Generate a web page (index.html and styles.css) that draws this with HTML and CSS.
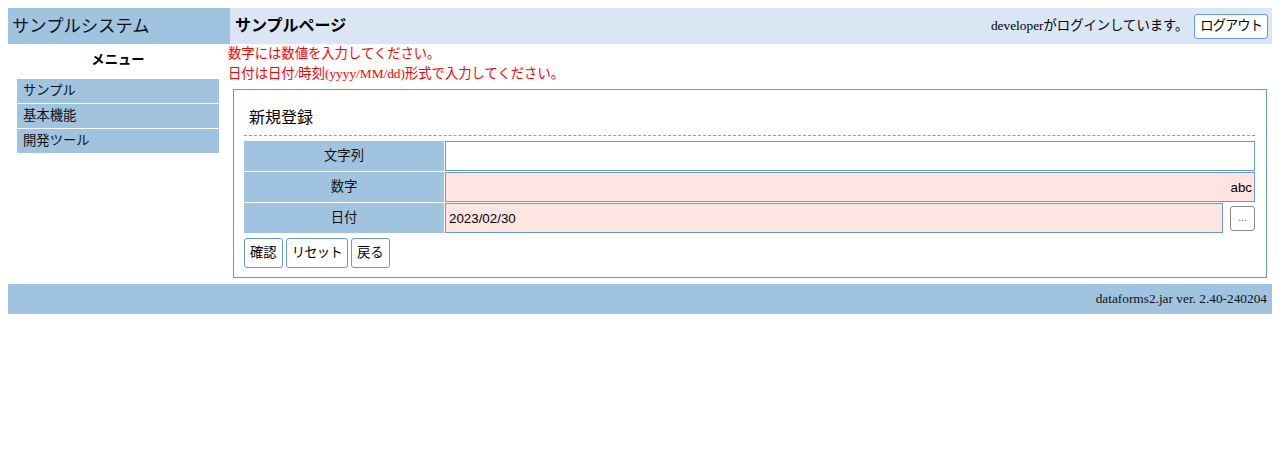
FILE: index.html
```html
<!DOCTYPE html>
<html lang="ja">
<head>
<meta charset="utf-8">
<title>サンプルページ</title>
<link rel="stylesheet" href="styles.css">
</head>
<body>
<div class="page">
  <header class="top">
    <div class="sys">サンプルシステム</div>
    <div class="bar">
      <h1 class="page-title">サンプルページ</h1>
      <div class="user">
        <span class="user-text">developerがログインしています。</span>
        <button class="btn logout" type="button">ログアウト</button>
      </div>
    </div>
  </header>
  <div class="main">
    <nav class="side">
      <div class="menu-title">メニュー</div>
      <ul class="menu">
        <li class="menu-item">サンプル</li>
        <li class="menu-item">基本機能</li>
        <li class="menu-item">開発ツール</li>
      </ul>
    </nav>
    <section class="content">
      <div class="errors">
        <div class="error">数字には数値を入力してください。</div>
        <div class="error">日付は日付/時刻(yyyy/MM/dd)形式で入力してください。</div>
      </div>
      <div class="form-box">
        <div class="form-title">新規登録</div>
        <div class="form-grid">
          <div class="label">文字列</div>
          <div class="field"><input class="text-input" type="text" value=""></div>
          <div class="label">数字</div>
          <div class="field"><input class="text-input error-input num" type="text" value="abc"></div>
          <div class="label">日付</div>
          <div class="field date-field">
            <input class="text-input error-input" type="text" value="2023/02/30">
            <button class="pick" type="button">...</button>
          </div>
        </div>
        <div class="actions">
          <button class="btn action" type="button">確認</button>
          <button class="btn action kana" type="button">リセット</button>
          <button class="btn action" type="button">戻る</button>
        </div>
      </div>
    </section>
  </div>
  <footer class="foot">dataforms2.jar ver. 2.40-240204</footer>
</div>
</body>
</html>
```

FILE: styles.css
```css
html, body {
  margin: 0;
  padding: 0;
  background: #ffffff;
}
body {
  margin: 8px;
  font-family: "Liberation Serif", "Noto Sans CJK JP", serif;
  font-size: 13.33px;
  color: #000;
}
.top {
  display: flex;
  height: 36px;
}
.sys {
  width: 218px;
  padding-left: 4px;
  background: #a0c3e0;
  font-family: "Liberation Sans", "Noto Sans CJK JP", sans-serif;
  font-size: 17.33px;
  line-height: 36px;
  color: #111;
}
.bar {
  flex: 1;
  display: flex;
  align-items: center;
  justify-content: space-between;
  padding: 0 4px 0 5px;
  background: #dae6f3;
}
.page-title {
  margin: 0;
  font-family: "Liberation Sans", "Noto Sans CJK JP", sans-serif;
  font-size: 16px;
  font-weight: bold;
  line-height: 36px;
}
.user {
  display: flex;
  align-items: center;
  gap: 6px;
}
.user-text {
  font-size: 13.33px;
  line-height: 20px;
}
.btn {
  font-family: "Liberation Sans", "Noto Sans CJK JP", sans-serif;
  font-size: 13.33px;
  color: #000;
  background: #fff;
  border: 1px solid #6699cc;
  border-radius: 3px;
  padding: 0 5px;
  margin: 0;
}
.logout {
  height: 25px;
  line-height: 22px;
  letter-spacing: -1px;
}
.main {
  display: flex;
}
.side {
  width: 220px;
  padding-top: 6px;
  font-family: "Liberation Sans", "Noto Sans CJK JP", sans-serif;
}
.menu-title {
  text-align: center;
  font-weight: bold;
  line-height: 20px;
  margin-bottom: 9px;
}
.menu {
  list-style: none;
  margin: 0 9px;
  padding: 0;
  display: flex;
  flex-direction: column;
  gap: 1px;
}
.menu-item {
  height: 24px;
  line-height: 24px;
  padding-left: 6px;
  background: #a0c3e0;
  color: #111;
}
.content {
  flex: 1;
  padding-bottom: 6px;
}
.errors {
  color: #ff0000;
  line-height: 20px;
}
.form-box {
  margin: 5px 5px 0;
  border: 1px solid #6699cc;
  padding: 10px 11px 9px 10px;
}
.form-title {
  font-family: "Liberation Sans", "Noto Sans CJK JP", sans-serif;
  font-size: 16px;
  line-height: 24px;
  padding: 6px 5px 5px;
  border-bottom: 1px dashed #7f9fbf;
}
.form-grid {
  margin-top: 5px;
  display: grid;
  grid-template-columns: 200px 1fr;
  grid-auto-rows: 30px;
  gap: 1px;
  font-family: "Liberation Sans", "Noto Sans CJK JP", sans-serif;
}
.label {
  background: #a0c3e0;
  text-align: center;
  line-height: 30px;
  color: #111;
}
.field {
  display: flex;
  align-items: stretch;
}
.date-field {
  align-items: center;
}
.text-input {
  flex: 1;
  min-width: 0;
  height: 30px;
  box-sizing: border-box;
  margin: 0;
  border: 1px solid #6699cc;
  padding: 0 3px;
  font-family: "Liberation Sans", "Noto Sans CJK JP", sans-serif;
  font-size: 13.33px;
  color: #000;
  background: #fff;
  outline: none;
}
.error-input {
  background: #ffe4e1;
}
.num {
  text-align: right;
  padding-right: 2px;
}
.pick {
  width: 25px;
  height: 25px;
  margin: 0 0 0 7px;
  padding: 0;
  border: 1px solid #888;
  border-radius: 3px;
  background: #fff;
  color: #555;
  font-family: "Liberation Sans", sans-serif;
  font-size: 10px;
  line-height: 20px;
}
.actions {
  display: flex;
  gap: 3px;
  margin-top: 5px;
}
.action {
  height: 30px;
  line-height: 26px;
}
.kana {
  letter-spacing: -0.75px;
}
.foot {
  height: 30px;
  line-height: 30px;
  background: #a0c3e0;
  text-align: right;
  padding-right: 5px;
  font-size: 13.33px;
  color: #111;
}
```
